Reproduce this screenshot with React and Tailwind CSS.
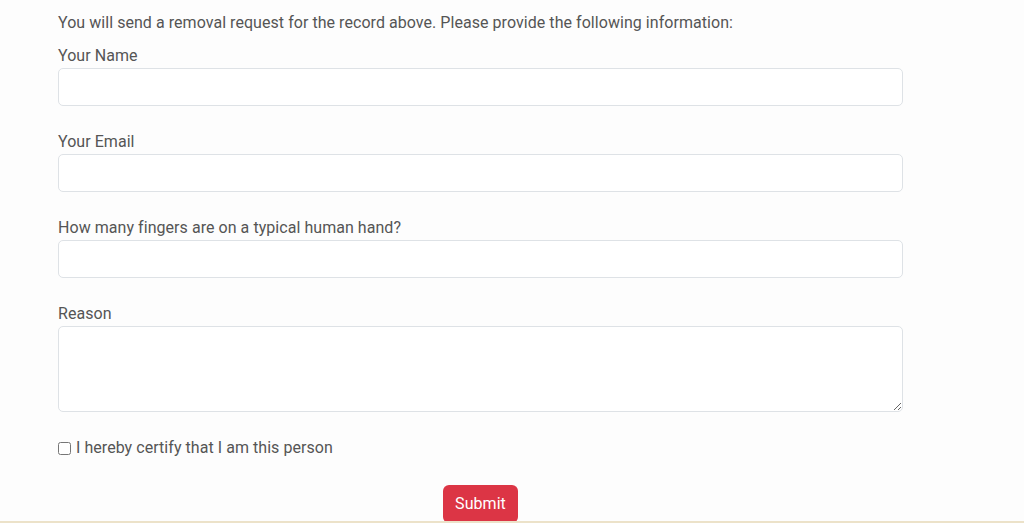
import React, { useState } from "react";

const inputClass =
    "block w-full h-[38px] border border-[#dee2e6] rounded-[5px] bg-white px-3 text-[16px] text-[#495057] outline-none";

const RemovalForm = () => {
    const [form, setForm] = useState({ name: "", email: "", fingers: "", reason: "", certify: false });

    const handleChange = (e) => {
        const { name, value, type, checked } = e.target;
        setForm({ ...form, [name]: type === "checkbox" ? checked : value });
    };

    return (
        <div className="w-[845px] ml-[58px] tracking-[0.05px]">
            <p className="leading-6 pt-[11px] mb-[9px]">
                You will send a removal request for the record above. Please provide the following information:
            </p>

            <label className="block leading-6">Your Name</label>
            <input className={inputClass} name="name" value={form.name} onChange={handleChange} />

            <label className="block leading-6 mt-[24px]">Your Email</label>
            <input className={inputClass} name="email" type="email" value={form.email} onChange={handleChange} />

            <label className="block leading-6 mt-[24px]">How many fingers are on a typical human hand?</label>
            <input className={inputClass} name="fingers" value={form.fingers} onChange={handleChange} />

            <label className="block leading-6 mt-[24px]">Reason</label>
            <textarea
                className="block w-full h-[86px] border border-[#dee2e6] rounded-[5px] bg-white px-3 py-1.5 text-[16px] text-[#495057] outline-none"
                name="reason"
                rows={3}
                value={form.reason}
                onChange={handleChange}
            />

            <label className="flex items-center gap-[5px] leading-6 mt-[24px]">
                <input
                    type="checkbox"
                    name="certify"
                    className="w-[13px] h-[13px] m-0"
                    checked={form.certify}
                    onChange={handleChange}
                />
                I hereby certify that I am this person
            </label>

            <div className="flex justify-center mt-[25px]">
                <button className="bg-[#dc3545] text-white h-[38px] px-3 rounded-[6px] leading-6 hover:bg-[#bb2d3b]">
                    Submit
                </button>
            </div>
        </div>
    );
};

export default function App() {
    return (
        <div
            className="h-[523px] overflow-hidden bg-[#fdfdfd] text-[16px] text-[#555]"
            style={{ fontFamily: "Roboto, 'Liberation Sans', sans-serif" }}
        >
            <div className="h-[521px] overflow-hidden">
                <RemovalForm />
            </div>
            <div className="h-[2px] bg-[#ece2c9]" />
        </div>
    );
}
